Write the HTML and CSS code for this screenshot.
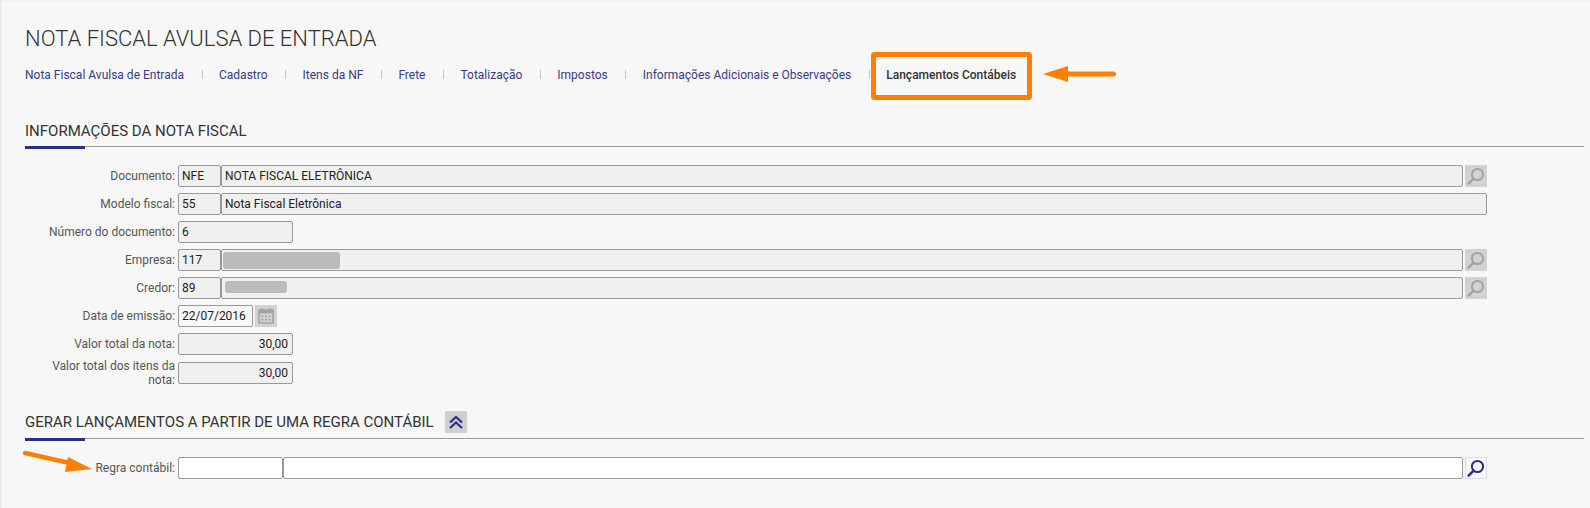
FILE: index.html
```html
<!DOCTYPE html>
<html lang="pt-BR">
<head>
<meta charset="utf-8">
<title>Nota Fiscal Avulsa de Entrada</title>
<link rel="stylesheet" href="styles.css">
</head>
<body>
<svg class="defs" width="0" height="0" aria-hidden="true">
  <symbol id="lupa" viewBox="0 0 22 22">
    <circle cx="12.5" cy="9.5" r="5.6" fill="none" stroke="currentColor" stroke-width="2"/>
    <path d="M8.3 13.8 3.6 18.6" fill="none" stroke="currentColor" stroke-width="2.6" stroke-linecap="round"/>
  </symbol>
</svg>
<main class="page">
  <h1 class="title">NOTA FISCAL AVULSA DE ENTRADA</h1>
  <nav class="tabs">
    <a class="tab">Nota Fiscal Avulsa de Entrada</a>
    <a class="tab">Cadastro</a>
    <a class="tab">Itens da NF</a>
    <a class="tab">Frete</a>
    <a class="tab">Totalização</a>
    <a class="tab">Impostos</a>
    <a class="tab">Informações Adicionais e Observações</a>
    <a class="tab tab-active">Lançamentos Contábeis</a>
  </nav>

  <h2 class="section"><span>INFORMAÇÕES DA NOTA FISCAL</span></h2>
  <div class="form">
    <div class="row">
      <label class="label">Documento:</label>
      <div class="field code">NFE</div>
      <div class="field grow">NOTA FISCAL ELETRÔNICA</div>
      <button class="icon-btn"><svg class="ico"><use href="#lupa"/></svg></button>
    </div>
    <div class="row">
      <label class="label">Modelo fiscal:</label>
      <div class="field code">55</div>
      <div class="field grow">Nota Fiscal Eletrônica</div>
    </div>
    <div class="row">
      <label class="label">Número do documento:</label>
      <div class="field wide">6</div>
    </div>
    <div class="row">
      <label class="label">Empresa:</label>
      <div class="field code">117</div>
      <div class="field grow"><i class="blur blur-a"></i></div>
      <button class="icon-btn"><svg class="ico"><use href="#lupa"/></svg></button>
    </div>
    <div class="row">
      <label class="label">Credor:</label>
      <div class="field code">89</div>
      <div class="field grow"><i class="blur blur-b"></i></div>
      <button class="icon-btn"><svg class="ico"><use href="#lupa"/></svg></button>
    </div>
    <div class="row">
      <label class="label">Data de emissão:</label>
      <div class="field date">22/07/2016</div>
      <button class="icon-btn">
        <svg class="ico" viewBox="0 0 22 22">
          <path d="M4 5h14v13H4z" fill="none" stroke="currentColor" stroke-width="1.6"/>
          <path d="M4 5h14v3.4H4z" fill="currentColor"/>
          <path d="M7 3v3M15 3v3" stroke="currentColor" stroke-width="1.6"/>
          <path d="M6.500 10.500h2v1.600h-2zM10 10.500h2v1.600h-2zM13.500 10.500h2v1.600h-2zM6.500 13.800h2v1.600h-2zM10 13.800h2v1.600h-2zM13.500 13.800h2v1.600h-2z" fill="currentColor"/>
        </svg>
      </button>
    </div>
    <div class="row">
      <label class="label">Valor total da nota:</label>
      <div class="field wide num">30,00</div>
    </div>
    <div class="row row-last">
      <label class="label">Valor total dos itens da nota:</label>
      <div class="field wide num">30,00</div>
    </div>
  </div>

  <h2 class="section section-two">
    <span>GERAR LANÇAMENTOS A PARTIR DE UMA REGRA CONTÁBIL</span>
    <button class="icon-btn collapse">
      <svg class="ico" viewBox="0 0 22 22">
        <path d="M5 11.500 11 6 17 11.500M5 17 11 11.500 17 17" fill="none" stroke="currentColor" stroke-width="2.300"/>
      </svg>
    </button>
  </h2>
  <div class="form">
    <div class="row">
      <label class="label">Regra contábil:</label>
      <div class="field blank rule-code"></div>
      <div class="field blank grow"></div>
      <button class="icon-btn active"><svg class="ico"><use href="#lupa"/></svg></button>
    </div>
  </div>

  <svg class="note note-box" width="161" height="48" viewBox="0 0 161 48" aria-hidden="true">
    <rect x="2.500" y="2.500" width="156" height="43" rx="1" fill="none" stroke="#ff8000" stroke-width="5"/>
  </svg>
  <svg class="note note-left" width="73" height="16" viewBox="0 0 73 16" aria-hidden="true">
    <path d="M0 8 25 0V5.500H70.500a2.500 2.500 0 0 1 0 5H25V16Z" fill="#ff8000"/>
  </svg>
  <svg class="note note-right" width="74" height="24" viewBox="0 0 74 24" aria-hidden="true">
    <path d="M3 3 50 13.500" fill="none" stroke="#ff8000" stroke-width="4.500" stroke-linecap="round"/>
    <path d="M70 19 46 7 43 22Z" fill="#ff8000"/>
  </svg>
</main>
</body>
</html>
```
FILE: styles.css
```css
* { box-sizing: border-box; }
html, body { margin: 0; height: 100%; }
body {
  background: #f7f7f7;
  font-family: Roboto, "Liberation Sans", sans-serif;
  color: #333;
  overflow: hidden;
}
.defs { position: absolute; }
.page {
  position: relative;
  width: 1590px;
  height: 508px;
  padding: 26px 6px 0 25px;
  box-shadow: inset 2px 1px 2px -1px #e2e2e2;
}
.title {
  margin: 0;
  font-size: 22px;
  line-height: 26px;
  font-weight: 300;
  color: #333;
}
.tabs {
  display: flex;
  align-items: center;
  height: 20px;
  margin-top: 13px;
}
.tab {
  position: relative;
  padding: 0 17.5px;
  font-size: 12px;
  line-height: 20px;
  color: #393b85;
  white-space: nowrap;
}
.tab:first-child { padding-left: 0; }
.tab + .tab::before {
  content: "";
  position: absolute;
  left: 0;
  top: 5px;
  height: 9px;
  border-left: 1px solid #c4c4c4;
}
.tab-active { font-weight: 500; color: #333; }

.section {
  position: relative;
  display: flex;
  align-items: center;
  gap: 11px;
  margin: 36px 0 0;
  height: 26px;
  padding-bottom: 5px;
  font-size: 15px;
  font-weight: 400;
  color: #333;
  border-bottom: 1px solid #999;
}
.section::after {
  content: "";
  position: absolute;
  left: 0;
  bottom: -3px;
  width: 60px;
  height: 3px;
  background: #2a3185;
}
.section-two { margin-top: 27px; height: 28px; }

.form { display: flex; flex-direction: column; gap: 6px; margin-top: 18px; }
.row { display: flex; align-items: center; height: 22px; gap: 0; }
.row-last { margin-top: 1px; }
.label {
  flex: none;
  width: 150px;
  margin-right: 3px;
  text-align: right;
  font-size: 12px;
  line-height: 14px;
  color: #555;
}
.field {
  flex: none;
  height: 22px;
  padding: 0 4px 0 3px;
  font-size: 12px;
  line-height: 20px;
  color: #222;
  background: #f0f0f0;
  border: 1px solid #999;
  border-radius: 2px;
  white-space: nowrap;
}
.code { width: 43px; }
.rule-code { width: 105px; }
.grow { flex: 1 1 auto; }
.wide { width: 115px; }
.date { width: 75px; background: #f7f7f7; }
.num { text-align: right; }
.blank { background: #fff; }
.icon-btn {
  flex: none;
  width: 22px;
  height: 22px;
  margin: 0 97px 0 2px;
  padding: 0;
  border: 0;
  background: #d2d2d2;
  color: #a3a3a3;
}
.row:nth-child(2) .grow { margin-right: 97px; }
.row .date + .icon-btn { margin-right: 0; }
.ico { display: block; width: 22px; height: 22px; }
.collapse { margin: 0; color: #2a3185; background: #cfcfd1; }
.active { background: #f7f7f7; border: 1px solid #ddd; color: #2a3185; }
.active .ico { margin: -1px; }
.blur { display: block; position: absolute; background: #bbb; border-radius: 3px; }
.field.grow { position: relative; }
.blur-a { left: 1px; top: 2px; width: 117px; height: 17px; }
.blur-b { left: 3px; top: 3px; width: 62px; height: 12px; }

.note { position: absolute; }
.note-box { left: 871px; top: 52px; }
.note-left { left: 1043px; top: 66px; }
.note-right { left: 22px; top: 450px; }
```
